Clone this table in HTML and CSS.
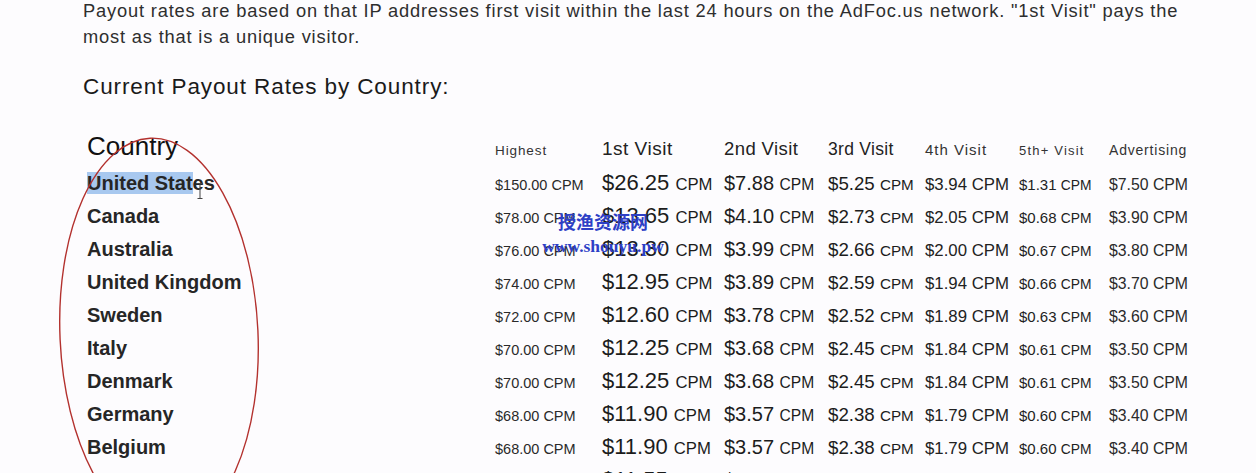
FILE: index.html
```html
<!DOCTYPE html>
<html lang="en">
<head>
<meta charset="utf-8">
<title>AdFoc.us Payout Rates</title>
<link rel="stylesheet" href="styles.css">
</head>
<body>
<main class="page">
  <p class="intro">Payout rates are based on that IP addresses first visit within the last 24 hours on the AdFoc.us network. "1st Visit" pays the most as that is a unique visitor.</p>
  <h2 class="title">Current Payout Rates by Country:</h2>
  <div class="rates">
    <div class="row head">
      <div class="c0">Country</div>
      <div class="c1">Highest</div>
      <div class="c2">1st Visit</div>
      <div class="c3">2nd Visit</div>
      <div class="c4">3rd Visit</div>
      <div class="c5">4th Visit</div>
      <div class="c6">5th+ Visit</div>
      <div class="c7">Advertising</div>
    </div>
    <div class="row">
      <div class="c0"><span class="sel">United Stat</span>es</div>
      <div class="c1">$150.00 CPM</div>
      <div class="c2">$26.25 <span class="u">CPM</span></div>
      <div class="c3">$7.88 <span class="u">CPM</span></div>
      <div class="c4">$5.25 <span class="u">CPM</span></div>
      <div class="c5">$3.94 CPM</div>
      <div class="c6">$1.31 <span class="u">CPM</span></div>
      <div class="c7">$7.50 CPM</div>
    </div>
    <div class="row">
      <div class="c0">Canada</div>
      <div class="c1">$78.00 CPM</div>
      <div class="c2">$13.65 <span class="u">CPM</span></div>
      <div class="c3">$4.10 <span class="u">CPM</span></div>
      <div class="c4">$2.73 <span class="u">CPM</span></div>
      <div class="c5">$2.05 CPM</div>
      <div class="c6">$0.68 <span class="u">CPM</span></div>
      <div class="c7">$3.90 CPM</div>
    </div>
    <div class="row">
      <div class="c0">Australia</div>
      <div class="c1">$76.00 CPM</div>
      <div class="c2">$13.30 <span class="u">CPM</span></div>
      <div class="c3">$3.99 <span class="u">CPM</span></div>
      <div class="c4">$2.66 <span class="u">CPM</span></div>
      <div class="c5">$2.00 CPM</div>
      <div class="c6">$0.67 <span class="u">CPM</span></div>
      <div class="c7">$3.80 CPM</div>
    </div>
    <div class="row">
      <div class="c0">United Kingdom</div>
      <div class="c1">$74.00 CPM</div>
      <div class="c2">$12.95 <span class="u">CPM</span></div>
      <div class="c3">$3.89 <span class="u">CPM</span></div>
      <div class="c4">$2.59 <span class="u">CPM</span></div>
      <div class="c5">$1.94 CPM</div>
      <div class="c6">$0.66 <span class="u">CPM</span></div>
      <div class="c7">$3.70 CPM</div>
    </div>
    <div class="row">
      <div class="c0">Sweden</div>
      <div class="c1">$72.00 CPM</div>
      <div class="c2">$12.60 <span class="u">CPM</span></div>
      <div class="c3">$3.78 <span class="u">CPM</span></div>
      <div class="c4">$2.52 <span class="u">CPM</span></div>
      <div class="c5">$1.89 CPM</div>
      <div class="c6">$0.63 <span class="u">CPM</span></div>
      <div class="c7">$3.60 CPM</div>
    </div>
    <div class="row">
      <div class="c0">Italy</div>
      <div class="c1">$70.00 CPM</div>
      <div class="c2">$12.25 <span class="u">CPM</span></div>
      <div class="c3">$3.68 <span class="u">CPM</span></div>
      <div class="c4">$2.45 <span class="u">CPM</span></div>
      <div class="c5">$1.84 CPM</div>
      <div class="c6">$0.61 <span class="u">CPM</span></div>
      <div class="c7">$3.50 CPM</div>
    </div>
    <div class="row">
      <div class="c0">Denmark</div>
      <div class="c1">$70.00 CPM</div>
      <div class="c2">$12.25 <span class="u">CPM</span></div>
      <div class="c3">$3.68 <span class="u">CPM</span></div>
      <div class="c4">$2.45 <span class="u">CPM</span></div>
      <div class="c5">$1.84 CPM</div>
      <div class="c6">$0.61 <span class="u">CPM</span></div>
      <div class="c7">$3.50 CPM</div>
    </div>
    <div class="row">
      <div class="c0">Germany</div>
      <div class="c1">$68.00 CPM</div>
      <div class="c2">$11.90 <span class="u">CPM</span></div>
      <div class="c3">$3.57 <span class="u">CPM</span></div>
      <div class="c4">$2.38 <span class="u">CPM</span></div>
      <div class="c5">$1.79 CPM</div>
      <div class="c6">$0.60 <span class="u">CPM</span></div>
      <div class="c7">$3.40 CPM</div>
    </div>
    <div class="row">
      <div class="c0">Belgium</div>
      <div class="c1">$68.00 CPM</div>
      <div class="c2">$11.90 <span class="u">CPM</span></div>
      <div class="c3">$3.57 <span class="u">CPM</span></div>
      <div class="c4">$2.38 <span class="u">CPM</span></div>
      <div class="c5">$1.79 CPM</div>
      <div class="c6">$0.60 <span class="u">CPM</span></div>
      <div class="c7">$3.40 CPM</div>
    </div>
    <div class="row">
      <div class="c0">Norway</div>
      <div class="c1">$66.00 CPM</div>
      <div class="c2">$11.55 <span class="u">CPM</span></div>
      <div class="c3">$3.47 <span class="u">CPM</span></div>
      <div class="c4">$2.31 <span class="u">CPM</span></div>
      <div class="c5">$1.73 CPM</div>
      <div class="c6">$0.58 <span class="u">CPM</span></div>
      <div class="c7">$3.30 CPM</div>
    </div>
  </div>

  <svg class="marks" width="1256" height="473" viewBox="0 0 1256 473" aria-hidden="true">
    <ellipse cx="159" cy="335" rx="99" ry="197" transform="rotate(-2.6 159 335)" fill="none" stroke="#b3312e" stroke-width="1.4"/>
    <path d="M197.5 183.5h5M200 183.5v15M197.5 198.5h5" fill="none" stroke="#444" stroke-width="1"/>
  </svg>

  <div class="watermark">
    <div class="wm-cn">授渔资源网</div>
    <div class="wm-url">www.shouyu.pw</div>
  </div>
</main>
</body>
</html>
```

FILE: styles.css
```css
html, body {
  margin: 0;
  padding: 0;
}

body {
  background: #fdfcfe;
  font-family: "Liberation Sans", Arial, sans-serif;
  color: #1c1c1c;
  overflow: hidden;
}

.page {
  position: relative;
  height: 473px;
  padding-left: 83px;
  overflow: hidden;
}

.intro {
  margin: -2px 0 0;
  width: 1110px;
  font-size: 18.3px;
  letter-spacing: 0.82px;
  line-height: 26px;
  color: #2e2e2e;
}

.title {
  margin: 24px 0 30px;
  font-size: 22.5px;
  letter-spacing: 0.9px;
  font-weight: normal;
  line-height: 26px;
  color: #1a1a1a;
}

.rates {
  margin-left: 4px;
}

.row {
  display: flex;
  align-items: baseline;
  height: 33px;
  line-height: 33px;
  white-space: nowrap;
}

.row.head {
  height: 36px;
}

.c0 { width: 408px; }
.c1 { width: 107px; }
.c2 { width: 122px; }
.c3 { width: 104px; }
.c4 { width: 97px; }
.c5 { width: 94px; }
.c6 { width: 90px; }
.c7 { width: 100px; }

/* body cells */
.c0 { font-size: 20px; font-weight: bold; color: #262626; }
.c1 { font-size: 14.5px; color: #2a2a2a; }
.c2 { font-size: 22px; color: #1c1c1c; }
.c2 .u { font-size: 16.7px; }
.c3 { font-size: 20px; color: #1c1c1c; }
.c3 .u { font-size: 15.6px; }
.c4 { font-size: 18.7px; color: #1c1c1c; }
.c4 .u { font-size: 15.2px; }
.c5 { font-size: 16.8px; color: #222; }
.c6 { font-size: 15px; color: #222; }
.c6 .u { font-size: 13.8px; }
.c7 { font-size: 15.8px; color: #2a2a2a; }

/* header cells */
.head .c0 { font-size: 26px; font-weight: normal; color: #111; }
.head .c1 { font-size: 13.5px; letter-spacing: 0.9px; color: #333; }
.head .c2 { font-size: 19px; letter-spacing: 0.5px; color: #222; }
.head .c3 { font-size: 18.5px; letter-spacing: 0.4px; color: #222; }
.head .c4 { font-size: 17.5px; letter-spacing: 0.3px; color: #222; }
.head .c5 { font-size: 15px; letter-spacing: 1px; color: #333; }
.head .c6 { font-size: 13px; letter-spacing: 1.2px; color: #333; }
.head .c7 { font-size: 14px; letter-spacing: 0.8px; color: #333; }

.sel {
  background: #a8c8ef;
}

.marks {
  position: absolute;
  top: 0;
  left: 0;
  pointer-events: none;
}

.watermark {
  position: absolute;
  left: 541px;
  top: 208px;
  width: 124px;
  color: #2d3fc6;
  text-align: center;
  pointer-events: none;
}

.wm-cn {
  font-family: "Noto Sans CJK SC", sans-serif;
  font-weight: bold;
  font-size: 18px;
  line-height: 26px;
}

.wm-url {
  font-family: "Liberation Serif", "Times New Roman", serif;
  font-weight: bold;
  font-size: 17.5px;
  line-height: 24px;
}
```
